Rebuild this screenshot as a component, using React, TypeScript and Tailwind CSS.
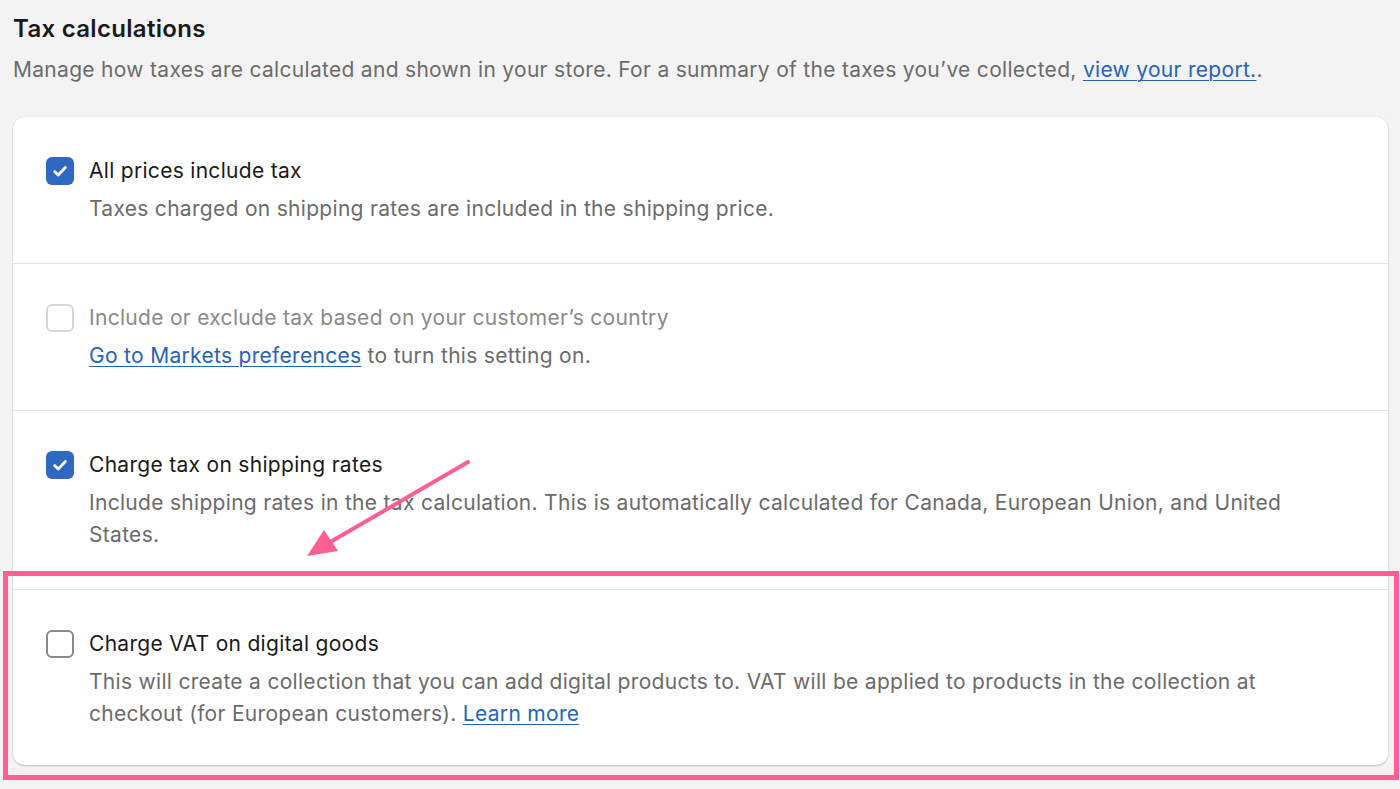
import React from 'react';

type Row = {
	label: string;
	checked: boolean;
	disabled?: boolean;
	description: React.ReactNode;
};

function CheckBox({ checked, disabled }: { checked: boolean; disabled?: boolean }) {
	if (checked) {
		return (
			<span className="flex h-[28px] w-[28px] shrink-0 items-center justify-center rounded-[6px] bg-[#2f68c0]">
				<svg width="20" height="20" viewBox="0 0 20 20" fill="none">
					<path d="M4.6 10.6l3.6 3.4L15.4 6.6" stroke="white" strokeWidth="2.8" strokeLinecap="round" strokeLinejoin="round" />
				</svg>
			</span>
		);
	}
	return (
		<span
			className={`h-[28px] w-[28px] shrink-0 rounded-[6px] border-2 bg-white ${
				disabled ? 'border-[#d6d6d6]' : 'border-[#8a8a8a]'
			}`}
		/>
	);
}

const link = 'text-[#2463bc] underline underline-offset-[3px] decoration-1';

const rows: Row[] = [
	{
		label: 'All prices include tax',
		checked: true,
		description: 'Taxes charged on shipping rates are included in the shipping price.',
	},
	{
		label: 'Include or exclude tax based on your customer\u2019s country',
		checked: false,
		disabled: true,
		description: (
			<>
				<a className={link}>Go to Markets preferences</a> to turn this setting on.
			</>
		),
	},
	{
		label: 'Charge tax on shipping rates',
		checked: true,
		description:
			'Include shipping rates in the tax calculation. This is automatically calculated for Canada, European Union, and United States.',
	},
	{
		label: 'Charge VAT on digital goods',
		checked: false,
		description: (
			<>
				This will create a collection that you can add digital products to. VAT will be applied to products in the collection at
				checkout (for European customers). <a className={link}>Learn more</a>
			</>
		),
	},
];

export default function App() {
	return (
		<div className="relative h-[789px] w-[1400px] overflow-hidden bg-[#f3f3f3] font-['Inter','Liberation_Sans',sans-serif] antialiased">
			<div className="px-[13px] pt-[14px]">
				<h1 className="text-[24px] font-semibold leading-[30px] tracking-[0.3px] text-[#1a1a1a]">Tax calculations</h1>
				<p className="mt-[10px] text-[21px] leading-[32px] tracking-[0.3px] text-[#6b6b6b]">
					Manage how taxes are calculated and shown in your store. For a summary of the taxes you&rsquo;ve collected,{' '}
					<a className={link}>view your report.</a>.
				</p>
				<div className="mt-[31px] w-[1375px] overflow-hidden rounded-[12px] bg-white shadow-[0_1px_2px_rgba(0,0,0,0.18),0_0_0_1px_rgba(0,0,0,0.03)]">
					{rows.map((row, i) => (
						<div
							key={row.label}
							className={`flex gap-[15px] pl-[33px] pr-[33px] pt-[38px] ${
								i < rows.length - 1 ? 'border-b border-[#e3e3e3] pb-[38px]' : 'pb-[35px]'
							}`}
						>
							<div className="flex h-[32px] items-center">
								<CheckBox checked={row.checked} disabled={row.disabled} />
							</div>
							<div className="flex flex-col gap-[6px] text-[21px] leading-[32px] tracking-[0.3px]">
								<div className={row.disabled ? 'text-[#8a8a8a]' : 'text-[#1a1a1a]'}>{row.label}</div>
								<div className="text-[#6b6b6b]">{row.description}</div>
							</div>
						</div>
					))}
				</div>
			</div>

			{/* annotation */}
			<div className="pointer-events-none absolute left-[3px] top-[571px] h-[209px] w-[1396px] border-[5px] border-[#ff5f93]" />
			<svg className="pointer-events-none absolute left-0 top-0" width="1400" height="789">
				<line x1="468" y1="462" x2="332" y2="541" stroke="#ff5f93" strokeWidth="4" strokeLinecap="round" />
				<polygon points="307,556 324,530 338,551" fill="#ff5f93" />
			</svg>
		</div>
	);
}
